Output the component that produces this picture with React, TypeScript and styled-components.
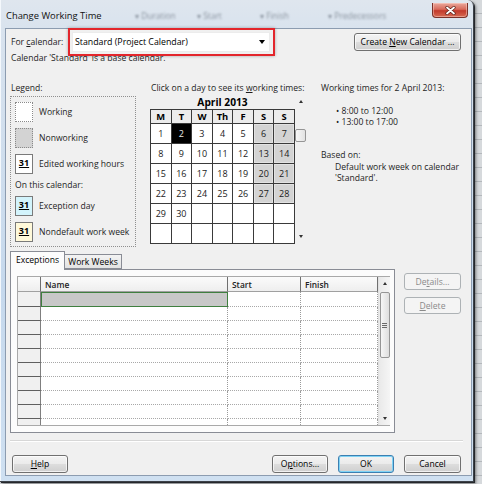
import styled, { createGlobalStyle, css } from "styled-components";

const GlobalStyle = createGlobalStyle`
  html, body { margin: 0; padding: 0; }
  body {
    font-family: "Open Sans", "Noto Sans", sans-serif;
    font-size: 8.6px;
    color: #1e1e1e;
  }
  * { box-sizing: border-box; }
`;

const Page = styled.div`
  width: 482px;
  height: 484px;
  overflow: hidden;
  background: repeating-linear-gradient(180deg, #d6d9dc 0 13px, #b4b8bc 13px 14px);
`;

const Window = styled.div`
  width: 474px;
  height: 482px;
  display: flex;
  flex-direction: column;
  padding: 0 1px 5px 5px;
  border-right: 1px solid #3c4148;
  border-bottom: 1px solid #3c4148;
  border-radius: 0 6px 0 0;
  background: linear-gradient(180deg, #dfe6ee 0, #d9e3ee 28px, #c6d9ed 60%, #cfe0f1 100%);
  box-shadow: inset 1px 0 0 #f4f8fc, 1px 1px 0 #25282c, 2px 2px 3px rgba(0, 0, 0, 0.45);
`;

const TitleBar = styled.div`
  height: 28px;
  display: flex;
  align-items: flex-start;
  padding-left: 1px;
`;

const TitleText = styled.div`
  width: 129px;
  margin-top: 9px;
  font-size: 9.4px;
  color: #111;
`;

const GhostHeaders = styled.div`
  display: flex;
  margin-top: 10px;
  filter: blur(0.9px);
  color: rgba(55, 65, 80, 0.5);
  font-size: 8.4px;
  white-space: nowrap;
`;

const GhostHead = styled.span<{ $w: number }>`
  width: ${(p) => p.$w}px;
`;

const CloseButton = styled.div`
  margin-left: auto;
  margin-top: 3px;
  margin-right: 4px;
  width: 36px;
  height: 15px;
  border: 1px solid #7a3129;
  border-top: none;
  border-radius: 0 0 4px 4px;
  background: linear-gradient(180deg, #eaa89c 0%, #d86a5b 45%, #c2392b 55%, #d66a52 100%);
  box-shadow: inset 0 0 0 1px rgba(255, 220, 210, 0.45);
  display: flex;
  align-items: center;
  justify-content: center;
`;

const Content = styled.div`
  height: 448px;
  background: #f0f0f0;
  border: 1px solid #8c9cb0;
  display: flex;
  flex-direction: column;
  padding: 0 10px 0 4px;
`;

const CalendarRow = styled.div`
  display: flex;
  align-items: center;
  height: 28px;
  margin-top: -1px;
`;

const FieldLabel = styled.label`
  width: 58px;
  padding-left: 1px;
  white-space: nowrap;
`;

const Highlight = styled.div`
  width: 207px;
  height: 28px;
  border: 2px solid #e3262c;
  padding: 2px 3px 2px 2px;
  box-shadow: 0 0 3px rgba(0, 0, 0, 0.3);
  position: relative;
  z-index: 1;
`;

const Select = styled.div`
  height: 100%;
  background: #fff;
  border: 1px solid #ececec;
  display: flex;
  align-items: center;
  justify-content: space-between;
  padding: 0 4px 0 2px;
  font-size: 8.8px;
  color: #000;
`;

const Caret = styled.span`
  width: 0;
  height: 0;
  border-left: 3.5px solid transparent;
  border-right: 3.5px solid transparent;
  border-top: 4px solid #000;
`;

const InfoLine = styled.div`
  line-height: 10px;
  margin-top: -3px;
  padding-left: 1px;
`;

const Main = styled.div`
  display: flex;
  margin-top: 20px;
`;

const Caption = styled.div`
  line-height: 10px;
  margin-bottom: 3px;
  padding-left: 1px;
  white-space: nowrap;
`;

const LegendColumn = styled.div`
  width: 126px;
`;

const LegendBox = styled.div`
  height: 151px;
  border: 1px dotted #8f8f8f;
  padding: 5px 4px;
  display: flex;
  flex-direction: column;
  gap: 6px;
`;

const LegendItem = styled.div`
  display: flex;
  align-items: center;
  gap: 6px;
  height: 20px;
`;

type SwatchKind = "working" | "nonworking" | "edited" | "exception" | "nondefault";

const swatchBg: Record<SwatchKind, string> = {
  working: "#fff",
  nonworking: "#d3d3d3",
  edited: "#fff",
  exception: "#d3f4fc",
  nondefault: "#fff9da",
};

const Swatch = styled.div<{ $kind: SwatchKind }>`
  width: 18px;
  height: 20px;
  background: ${(p) => swatchBg[p.$kind]};
  border: 1px ${(p) => (p.$kind === "working" || p.$kind === "nonworking" ? "dotted #8a8a8a" : "solid #7a7a7a")};
  display: flex;
  align-items: center;
  justify-content: center;
  font-weight: 700;
  font-size: 9px;
  text-decoration: underline;
  color: #000;
  padding-bottom: 3px;
`;

const LegendSub = styled.div`
  line-height: 10px;
  height: 10px;
`;

const CalendarColumn = styled.div`
  width: 156px;
  margin-left: 14px;
`;

const CalBox = styled.div`
  display: flex;
  height: 148px;
`;

const MonthArea = styled.div`
  width: 145px;
  display: flex;
  flex-direction: column;
`;

const MonthTitle = styled.div`
  height: 13px;
  line-height: 13px;
  text-align: center;
  font-weight: 700;
  font-size: 10.2px;
  color: #000;
`;

const CalGrid = styled.div`
  display: grid;
  grid-template-columns: repeat(7, 1fr);
  grid-template-rows: 13px repeat(6, 19px);
  gap: 1px;
  padding: 1px;
  background: #3a3a3a;
`;

const DayHead = styled.div`
  background: #ececec;
  display: flex;
  align-items: center;
  justify-content: center;
  font-weight: 700;
  font-size: 9.4px;
  color: #000;
`;

type DayKind = "work" | "off" | "sel" | "empty";

const DayCell = styled.div<{ $kind: DayKind }>`
  display: flex;
  align-items: center;
  justify-content: center;
  font-size: 9px;
  color: #1a1a1a;
  background: #fff;
  ${(p) =>
    p.$kind === "off" &&
    css`
      background: #d3d3d3;
      box-shadow: inset 0 0 0 1px #e2e2e2;
    `}
  ${(p) =>
    p.$kind === "sel" &&
    css`
      background: #000;
      color: #e8e8e8;
    `}
`;

const CalScroll = styled.div`
  width: 11px;
  display: flex;
  flex-direction: column;
  align-items: center;
  padding: 4px 0 6px;
`;

const ScrollArrow = styled.span<{ $down?: boolean }>`
  width: 0;
  height: 0;
  border-left: 2.5px solid transparent;
  border-right: 2.5px solid transparent;
  ${(p) => (p.$down ? "border-top: 3px solid #333;" : "border-bottom: 3px solid #333;")}
`;

const CalThumb = styled.div`
  width: 11px;
  height: 13px;
  margin-top: 26px;
  margin-bottom: auto;
  border: 1px solid #959595;
  border-radius: 2px;
  background: linear-gradient(90deg, #f7f7f7, #e2e2e2);
`;

const TimesColumn = styled.div`
  margin-left: 15px;
  display: flex;
  flex-direction: column;
`;

const TextLine = styled.div<{ $indent?: number; $gap?: number }>`
  line-height: 11px;
  white-space: nowrap;
  padding-left: ${(p) => p.$indent ?? 0}px;
  margin-top: ${(p) => p.$gap ?? 0}px;
`;

const Lower = styled.div`
  display: flex;
  margin-top: 4px;
`;

const TabsBlock = styled.div`
  width: 385px;
  display: flex;
  flex-direction: column;
`;

const TabStrip = styled.div`
  display: flex;
  align-items: flex-end;
  height: 18px;
`;

const Tab = styled.div<{ $active?: boolean; $w: number }>`
  width: ${(p) => p.$w}px;
  height: ${(p) => (p.$active ? 19 : 15)}px;
  margin-bottom: ${(p) => (p.$active ? -1 : 0)}px;
  border: 1px solid #898c95;
  border-bottom: ${(p) => (p.$active ? "none" : "1px solid #898c95")};
  border-left: ${(p) => (p.$active ? "1px solid #898c95" : "none")};
  background: ${(p) => (p.$active ? "#fcfcfc" : "linear-gradient(180deg, #f3f3f3, #e3e3e3)")};
  display: flex;
  align-items: center;
  justify-content: center;
  padding-bottom: ${(p) => (p.$active ? 2 : 0)}px;
  color: #000;
  position: relative;
  z-index: ${(p) => (p.$active ? 1 : 0)};
`;

const TabPanel = styled.div`
  height: 164px;
  border: 1px solid #898c95;
  background: #fcfcfc;
  padding: 6px 4px 6px 6px;
`;

const ExTable = styled.div`
  display: flex;
  height: 150px;
  border: 1px solid #a9a9a9;
  border-right: none;
  background: #fff;
  overflow: hidden;
`;

const ExGrid = styled.div`
  flex: 1;
  display: flex;
  flex-direction: column;
  overflow: hidden;
`;

const ExRow = styled.div<{ $h: number }>`
  display: grid;
  grid-template-columns: 23px 187px 73px 77px;
  height: ${(p) => p.$h}px;
  flex-shrink: 0;
`;

const HeadCell = styled.div`
  background: linear-gradient(180deg, #fbfbfb, #eeeeee);
  border-right: 1px solid #6f6f6f;
  border-bottom: 1px solid #a0a0a0;
  padding-left: 4px;
  display: flex;
  align-items: center;
  font-weight: 600;
  font-size: 8.4px;
  color: #222;
`;

const RowHead = styled.div`
  background: #f0f0f0;
  border-right: 1px solid #7f7f7f;
  border-bottom: 1px solid #5f5f5f;
`;

const Cell = styled.div<{ $selected?: boolean }>`
  border-right: 1px dotted #9a9a9a;
  border-bottom: 1px dotted #a8a8a8;
  background: #fff;
  ${(p) =>
    p.$selected &&
    css`
      background: #c8c8c8;
      border: none;
      box-shadow: inset 0 0 0 1px #3f7f3f;
    `}
`;

const TableScroll = styled.div`
  width: 12px;
  background: linear-gradient(90deg, #e9e9e9, #f5f5f5);
  border-left: 1px solid #e0e0e0;
  display: flex;
  flex-direction: column;
  align-items: center;
  padding: 5px 0 5px;
`;

const TableThumb = styled.div`
  width: 10px;
  height: 66px;
  margin-top: 7px;
  margin-bottom: auto;
  border: 1px solid #959595;
  border-radius: 2px;
  background: linear-gradient(90deg, #f6f6f6, #dedede);
  display: flex;
  align-items: center;
  justify-content: center;
`;

const Grip = styled.div`
  width: 5px;
  height: 5px;
  background: repeating-linear-gradient(180deg, #6a6a6a 0 1px, transparent 1px 2px);
`;

const SideButtons = styled.div`
  margin-left: 9px;
  margin-top: 22px;
  display: flex;
  flex-direction: column;
  gap: 7px;
`;

const Separator = styled.div`
  width: 453px;
  margin-top: 7px;
  height: 2px;
  border-top: 1px solid #d7d7d7;
  border-bottom: 1px solid #fff;
`;

const ButtonRow = styled.div`
  display: flex;
  margin-top: 13px;
  padding-left: 2px;
  gap: 10px;
`;

const Btn = styled.button<{ $w: number; $off?: boolean; $primary?: boolean; $push?: boolean }>`
  width: ${(p) => p.$w}px;
  height: ${(p) => (p.$off ? 17 : 18)}px;
  margin-left: ${(p) => (p.$push ? "auto" : "0")};
  padding: 0;
  font: inherit;
  font-size: 8.6px;
  color: #000;
  border: 1px solid #707070;
  border-radius: 3px;
  background: linear-gradient(180deg, #f3f3f3 0%, #ebebeb 48%, #dddddd 52%, #cfcfcf 100%);
  box-shadow: inset 0 0 0 1px rgba(255, 255, 255, 0.7);
  ${(p) =>
    p.$off &&
    css`
      border-color: #adb2b5;
      background: #f4f4f4;
      color: #8a8a8a;
      box-shadow: none;
    `}
  ${(p) =>
    p.$primary &&
    css`
      border-color: #3c7fb1;
      box-shadow: inset 0 0 0 1px #7fd3f5;
    `}
`;

const Key = styled.span`
  text-decoration: underline;
`;

const CloseIcon = () => (
  <svg width="11" height="9" viewBox="0 0 11 9">
    <path d="M2 1.5 L9 7.5 M9 1.5 L2 7.5" stroke="#5a1f18" strokeWidth="3.2" strokeLinecap="round" />
    <path d="M2 1.5 L9 7.5 M9 1.5 L2 7.5" stroke="#fff" strokeWidth="1.8" strokeLinecap="round" />
  </svg>
);

const dayHeads = ["M", "T", "W", "Th", "F", "S", "S"];

function buildDays(): { label: string; kind: DayKind }[] {
  const cells: { label: string; kind: DayKind }[] = [];
  for (let i = 0; i < 42; i++) {
    const day = i + 1;
    const col = i % 7;
    if (day > 30) {
      cells.push({ label: "", kind: "empty" });
    } else if (day === 2) {
      cells.push({ label: "2", kind: "sel" });
    } else if (col >= 5) {
      cells.push({ label: String(day), kind: "off" });
    } else {
      cells.push({ label: String(day), kind: "work" });
    }
  }
  return cells;
}

const rowHeights = [15, 14, 14, 14, 14, 14, 14, 14, 14, 14, 14];

export default function App() {
  const days = buildDays();

  return (
    <Page>
      <GlobalStyle />
      <Window>
        <TitleBar>
          <TitleText>Change Working Time</TitleText>
          <GhostHeaders>
            <GhostHead $w={62}>▾ Duration</GhostHead>
            <GhostHead $w={63}>▾ Start</GhostHead>
            <GhostHead $w={68}>▾ Finish</GhostHead>
            <GhostHead $w={70}>▾ Predecessors</GhostHead>
          </GhostHeaders>
          <CloseButton>
            <CloseIcon />
          </CloseButton>
        </TitleBar>

        <Content>
          <CalendarRow>
            <FieldLabel>
              For <Key>c</Key>alendar:
            </FieldLabel>
            <Highlight>
              <Select>
                <span>Standard (Project Calendar)</span>
                <Caret />
              </Select>
            </Highlight>
            <Btn $w={107} $push>
              Create <Key>N</Key>ew Calendar ...
            </Btn>
          </CalendarRow>
          <InfoLine>Calendar 'Standard' is a base calendar.</InfoLine>

          <Main>
            <LegendColumn>
              <Caption>Legend:</Caption>
              <LegendBox>
                <LegendItem>
                  <Swatch $kind="working" />
                  Working
                </LegendItem>
                <LegendItem>
                  <Swatch $kind="nonworking" />
                  Nonworking
                </LegendItem>
                <LegendItem>
                  <Swatch $kind="edited">31</Swatch>
                  Edited working hours
                </LegendItem>
                <LegendSub>On this calendar:</LegendSub>
                <LegendItem>
                  <Swatch $kind="exception">31</Swatch>
                  Exception day
                </LegendItem>
                <LegendItem>
                  <Swatch $kind="nondefault">31</Swatch>
                  Nondefault work week
                </LegendItem>
              </LegendBox>
            </LegendColumn>

            <CalendarColumn>
              <Caption>
                Click on a day to see its <Key>w</Key>orking times:
              </Caption>
              <CalBox>
                <MonthArea>
                  <MonthTitle>April 2013</MonthTitle>
                  <CalGrid>
                    {dayHeads.map((d, i) => (
                      <DayHead key={"h" + i}>{d}</DayHead>
                    ))}
                    {days.map((d, i) => (
                      <DayCell key={i} $kind={d.kind}>
                        {d.label}
                      </DayCell>
                    ))}
                  </CalGrid>
                </MonthArea>
                <CalScroll>
                  <ScrollArrow />
                  <CalThumb />
                  <ScrollArrow $down />
                </CalScroll>
              </CalBox>
            </CalendarColumn>

            <TimesColumn>
              <TextLine>Working times for 2 April 2013:</TextLine>
              <TextLine $indent={15} $gap={12}>
                • 8:00 to 12:00
              </TextLine>
              <TextLine $indent={15}>• 13:00 to 17:00</TextLine>
              <TextLine $gap={22}>Based on:</TextLine>
              <TextLine $indent={14} $gap={1}>
                Default work week on calendar
              </TextLine>
              <TextLine $indent={14}>'Standard'.</TextLine>
            </TimesColumn>
          </Main>

          <Lower>
            <TabsBlock>
              <TabStrip>
                <Tab $active $w={55}>
                  Exceptions
                </Tab>
                <Tab $w={57}>Work Weeks</Tab>
              </TabStrip>
              <TabPanel>
                <ExTable>
                  <ExGrid>
                    <ExRow $h={15}>
                      <HeadCell />
                      <HeadCell>Name</HeadCell>
                      <HeadCell>Start</HeadCell>
                      <HeadCell>Finish</HeadCell>
                    </ExRow>
                    {rowHeights.map((h, i) => (
                      <ExRow key={i} $h={h}>
                        <RowHead />
                        <Cell $selected={i === 0} />
                        <Cell />
                        <Cell />
                      </ExRow>
                    ))}
                  </ExGrid>
                  <TableScroll>
                    <ScrollArrow />
                    <TableThumb>
                      <Grip />
                    </TableThumb>
                    <ScrollArrow $down />
                  </TableScroll>
                </ExTable>
              </TabPanel>
            </TabsBlock>
            <SideButtons>
              <Btn $w={57} $off>
                De<Key>t</Key>ails...
              </Btn>
              <Btn $w={57} $off>
                <Key>D</Key>elete
              </Btn>
            </SideButtons>
          </Lower>

          <Separator />

          <ButtonRow>
            <Btn $w={56}>
              <Key>H</Key>elp
            </Btn>
            <Btn $w={56} $push>
              O<Key>p</Key>tions...
            </Btn>
            <Btn $w={56} $primary>
              OK
            </Btn>
            <Btn $w={57}>Cancel</Btn>
          </ButtonRow>
        </Content>
      </Window>
    </Page>
  );
}
